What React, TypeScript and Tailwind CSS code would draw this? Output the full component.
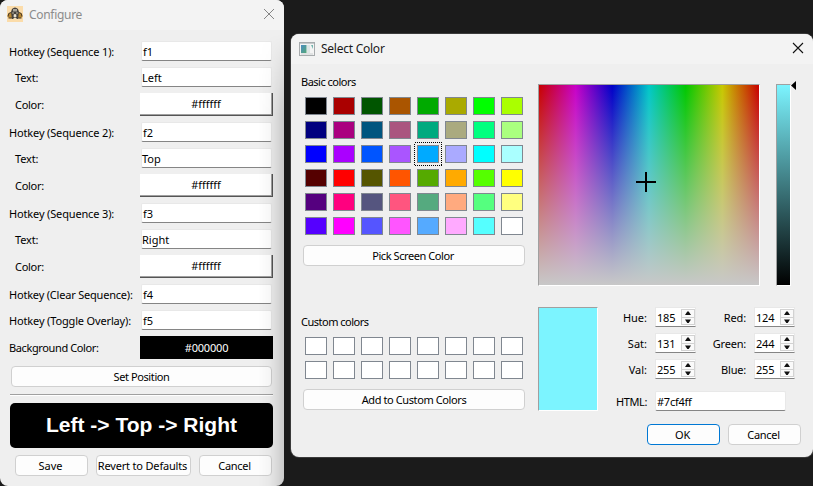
import React from "react";

const BASIC: string[][] = [
  ["#000000", "#aa0000", "#005500", "#aa5500", "#00aa00", "#aaaa00", "#00ff00", "#aaff00"],
  ["#00007f", "#aa007f", "#00557f", "#aa557f", "#00aa7f", "#aaaa7f", "#00ff7f", "#aaff7f"],
  ["#0000ff", "#aa00ff", "#0055ff", "#aa55ff", "#00aaff", "#aaaaff", "#00ffff", "#aaffff"],
  ["#550000", "#ff0000", "#555500", "#ff5500", "#55aa00", "#ffaa00", "#55ff00", "#ffff00"],
  ["#55007f", "#ff007f", "#55557f", "#ff557f", "#55aa7f", "#ffaa7f", "#55ff7f", "#ffff7f"],
  ["#5500ff", "#ff00ff", "#5555ff", "#ff55ff", "#55aaff", "#ffaaff", "#55ffff", "#ffffff"],
];

function Field({ value, className = "" }: { value: string; className?: string }) {
  return (
    <div className={`flex h-5 items-center rounded-[2px] border border-[#e8e8e8] border-b-[#858585] bg-white pt-0.5 ${className}`}>
      {value}
    </div>
  );
}

function Button({ label, className = "" }: { label: string; className?: string }) {
  return (
    <div className={`flex h-[21px] shrink-0 items-center justify-center whitespace-nowrap rounded-[4px] border bg-[#fdfdfd] ${className}`}>
      {label}
    </div>
  );
}

function FormRow({
  label,
  indent = false,
  tracking = "tracking-[-0.15px]",
  drop = true,
  children,
}: {
  label: string;
  indent?: boolean;
  tracking?: string;
  drop?: boolean;
  children: React.ReactNode;
}) {
  return (
    <div className="flex items-center">
      <div className={`w-[140px] shrink-0 whitespace-nowrap ${drop ? "pt-0.5" : ""} ${tracking} ${indent ? "pl-[15px]" : "pl-[9px]"}`}>
        {label}
      </div>
      {children}
    </div>
  );
}

function ColorButton({ value }: { value: string }) {
  return (
    <div className="flex h-[23px] w-[133px] items-center justify-center border-b border-r border-[#555] bg-white tracking-[-0.05px] shadow-[inset_-1px_-1px_0_#a0a0a0]">
      {value}
    </div>
  );
}

function Sequence({ n, text }: { n: number; text: string }) {
  return (
    <div className="flex flex-col gap-1.5">
      <FormRow label={`Hotkey (Sequence ${n}):`}>
        <Field value={`f${n}`} className="ml-px w-[131px] pl-px" />
      </FormRow>
      <FormRow label="Text:" indent>
        <Field value={text} className="ml-px w-[131px]" />
      </FormRow>
      <FormRow label="Color:" indent tracking="tracking-[-0.3px]" drop={false}>
        <ColorButton value="#ffffff" />
      </FormRow>
    </div>
  );
}

function Swatch({ color, selected = false }: { color: string; selected?: boolean }) {
  return (
    <div className="relative h-[18px] w-[22px] border border-[#808790]" style={{ backgroundColor: color }}>
      {selected && (
        <svg className="absolute -left-[4px] -top-[4px] h-6 w-7" viewBox="0 0 28 24" shapeRendering="crispEdges">
          <rect x=".5" y=".5" width="27" height="23" fill="none" stroke="#000" strokeDasharray="1 1" />
        </svg>
      )}
    </div>
  );
}

function Spin({ label, value, labelWidth }: { label: string; value: number; labelWidth: string }) {
  return (
    <div className="flex h-5 items-center">
      <div className={`${labelWidth} pt-0.5 text-right`}>{label}</div>
      <div className="ml-[7px] flex h-5 w-[41px] items-center border border-[#e8e8e8] border-b-[#858585] bg-white pl-px">
        <span className="w-6 pt-0.5 tracking-[-0.2px]">{value}</span>
        <svg className="h-4 w-[14px] shrink-0" viewBox="0 0 14 16">
          <rect x=".5" y=".5" width="13" height="15" fill="#fafafa" stroke="#d2d2d2" />
          <path d="M1 8.500H13" stroke="#d2d2d2" />
          <path d="M4 6L6.300 2.500H7.700L10 6Z M4 10.500H10L7.700 14H6.300Z" fill="#111" />
        </svg>
      </div>
    </div>
  );
}

function AppIcon() {
  return (
    <svg className="h-4 w-4" viewBox="0 0 16 16">
      <rect width="16" height="16" fill="#fbdcaa" />
      <circle cx="3.5" cy="9.5" r="2.8" fill="#b8862f" />
      <circle cx="12.5" cy="9.5" r="2.8" fill="#b8862f" />
      <path d="M1 10.500Q1 6.500 4 6.500M15 10.500Q15 6.500 12 6.500M1.500 12H5M11 12H14.500" stroke="#4a3a28" fill="none" />
      <path d="M5 3Q8 0 11 3L12 6L11 13H5L4 6Z" fill="#45413d" />
      <path d="M6 3H10V5.500H6Z" fill="#a9a59c" />
      <path d="M5 7H7M9 7H11M7 8.500H9V11H7Z" stroke="#ddd2bd" fill="#eee" strokeWidth=".8" />
      <path d="M6.500 12.500H9.500" stroke="#f7e3bd" />
    </svg>
  );
}

function DialogIcon() {
  return (
    <svg className="h-[14px] w-4" viewBox="0 0 16 14">
      <defs>
        <linearGradient id="pane" x2="1" y2="1">
          <stop stopColor="#4b8cc0" />
          <stop offset="1" stopColor="#55a878" />
        </linearGradient>
      </defs>
      <rect x=".5" y=".5" width="15" height="13" fill="#f4f4f4" stroke="#a7abad" />
      <path d="M1 1.500H15" stroke="#c5c9cb" />
      <rect x="2" y="3" width="5.5" height="8" fill="url(#pane)" />
      <rect x="8" y="3" width="3" height="8" fill="#dce5e5" />
      <path d="M12 3H14V7Z" fill="#72b4ad" />
      <path d="M2 12H14" stroke="#ccd0d1" />
    </svg>
  );
}

function ConfigureWindow() {
  return (
    <div className="absolute left-0 top-0 h-[486px] w-[284px] overflow-hidden rounded-[8px] bg-[#efefef]">
      <div className="flex h-[30px] items-center bg-[#f3f3f3] pl-[7px] pr-[9px]">
        <div className="-mt-0.5"><AppIcon /></div>
        <span className="ml-1.5 text-[12px] tracking-[-0.3px] text-[#8c8c8c]">Configure</span>
        <svg className="-mt-0.5 ml-auto h-3 w-3" viewBox="0 0 12 12">
          <path d="M1 1L11 11M11 1L1 11" stroke="#858585" />
        </svg>
      </div>
      <div className="mt-[11px] flex flex-col gap-1.5">
        <Sequence n={1} text="Left" />
        <Sequence n={2} text="Top" />
        <Sequence n={3} text="Right" />
        <FormRow label="Hotkey (Clear Sequence):" tracking="tracking-[-0.2px]">
          <Field value="f4" className="ml-px w-[131px] pl-px" />
        </FormRow>
        <FormRow label="Hotkey (Toggle Overlay):" tracking="tracking-[-0.15px]">
          <Field value="f5" className="ml-px w-[131px] pl-px" />
        </FormRow>
        <FormRow label="Background Color:" tracking="tracking-[-0.38px]" drop={false}>
          <div className="flex h-[23px] w-[133px] items-center justify-center bg-black tracking-[-0.2px] text-white">#000000</div>
        </FormRow>
      </div>
      <Button label="Set Position" className="ml-[11px] mt-[7px] w-[261px] border-[#d0d0d0] tracking-[-0.4px]" />
      <div className="ml-[10px] mt-[7px] h-0.5 w-[263px] border-b border-t border-b-white border-t-[#a0a0a0]" />
      <div className="ml-[10px] mt-[7px] flex h-[45px] w-[263px] items-center justify-center rounded-[5px] bg-black pb-0.5 font-['Liberation_Sans',Arial,sans-serif] text-[21px] font-bold text-white">
        Left -&gt; Top -&gt; Right
      </div>
      <div className="ml-[15px] mt-[7px] flex gap-2">
        <Button label="Save" className="w-[73px] border-[#d0d0d0] pr-0.5" />
        <Button label="Revert to Defaults" className="w-[95px] border-[#d0d0d0] pr-0.5 tracking-[-0.18px]" />
        <Button label="Cancel" className="w-[73px] border-[#d0d0d0] pr-0.5 tracking-[-0.3px]" />
      </div>
      <div className="absolute bottom-0 right-0 top-[34px] w-[26px] bg-[linear-gradient(to_right,transparent,rgba(0,0,0,0.03)_45%,rgba(0,0,0,0.15))] [mask-image:linear-gradient(to_bottom,transparent,black_80px)]" />
    </div>
  );
}

function ColorDialog() {
  return (
    <div className="absolute left-[291px] top-[34px] h-[423px] w-[522px] rounded-[8px] bg-[#efefef] shadow-[0_0_0_1px_#3b3b3b]">
      <div className="flex h-[30px] items-center rounded-t-[8px] bg-[#f3f3f3] pl-2 pr-[9px]">
        <DialogIcon />
        <span className="ml-1.5 text-[12px] tracking-[-0.25px] text-[#191919]">Select Color</span>
        <svg className="-mt-0.5 ml-auto h-3 w-3" viewBox="0 0 12 12">
          <path d="M1 1L11 11M11 1L1 11" stroke="#111" strokeWidth="1.1" />
        </svg>
      </div>
      <div className="flex">
        <div className="w-[247px] pl-3">
          <div className="-ml-[2px] mt-[10px] h-4 leading-4 tracking-[-0.5px]">Basic colors</div>
          <div className="ml-0.5 mt-[7px] grid w-[218px] grid-cols-8 gap-1.5">
            {BASIC.map((row, r) => row.map((c, i) => <Swatch key={`${r}-${i}`} color={c} selected={r === 2 && i === 4} />))}
          </div>
          <Button label="Pick Screen Color" className="mt-[10px] w-[222px] border-[#d0d0d0] pr-0.5 tracking-[-0.42px]" />
          <div className="-ml-[2px] mt-[48px] h-4 leading-4 tracking-[-0.5px]">Custom colors</div>
          <div className="ml-0.5 mt-[7px] grid w-[218px] grid-cols-8 gap-1.5">
            {Array.from({ length: 16 }, (_, i) => <Swatch key={i} color="#ffffff" />)}
          </div>
          <Button label="Add to Custom Colors" className="mt-[10px] w-[222px] border-[#d0d0d0] tracking-[-0.4px]" />
        </div>
        <div className="pt-5">
          <div className="flex">
            <div className="relative h-[202px] w-[222px] border border-b-white border-l-[#a0a0a0] border-r-white border-t-[#a0a0a0]">
              <div className="h-full w-full bg-[linear-gradient(to_bottom,rgba(200,200,200,0),#c8c8c8),linear-gradient(to_right,#c80000,#c800c8,#0000c8,#00c8c8,#00c800,#c8c800,#c80000)]" />
              <div className="absolute left-[97px] top-[96px] h-0.5 w-5 bg-black" />
              <div className="absolute left-[106px] top-[87px] h-5 w-0.5 bg-black" />
            </div>
            <div className="relative ml-4 h-[202px] w-[15px] border border-b-white border-l-[#a0a0a0] border-r-white border-t-[#a0a0a0] bg-[linear-gradient(to_bottom,#7cf4ff,#000)]">
              <svg className="absolute -top-1 left-[14px] h-[9px] w-[5px]" viewBox="0 0 5 9">
                <path d="M5 0V9L0 4.500Z" fill="#000" />
              </svg>
            </div>
          </div>
          <div className="mt-[21px] flex">
            <div className="h-[104px] w-[60px] border border-b-white border-l-[#a0a0a0] border-r-white border-t-[#a0a0a0] bg-[#7cf4ff]" />
            <div className="ml-[14px] flex flex-col">
              <div className="flex">
                <div className="flex flex-col gap-1.5">
                  <Spin label="Hue:" value={185} labelWidth="w-[35px] mr-px" />
                  <Spin label="Sat:" value={131} labelWidth="w-[35px] mr-px" />
                  <Spin label="Val:" value={255} labelWidth="w-[35px] mr-px" />
                </div>
                <div className="ml-2.5 flex flex-col gap-1.5">
                  <Spin label="Red:" value={124} labelWidth="w-10 mr-px tracking-[-0.1px]" />
                  <Spin label="Green:" value={244} labelWidth="w-10 mr-px tracking-[-0.2px]" />
                  <Spin label="Blue:" value={255} labelWidth="w-10 mr-px tracking-[-0.2px]" />
                </div>
              </div>
              <div className="mt-3 flex items-center">
                <div className="w-[35px] pt-0.5 text-right tracking-[-0.4px]">HTML:</div>
                <Field value="#7cf4ff" className="ml-2 w-[131px] pl-px tracking-[-0.25px]" />
              </div>
            </div>
          </div>
          <div className="ml-[109px] mt-[13px] flex gap-2">
            <Button label="OK" className="w-[73px] border-[#0078d4] pr-0.5 tracking-[-0.3px]" />
            <Button label="Cancel" className="w-[73px] border-[#d0d0d0] pr-0.5 tracking-[-0.3px]" />
          </div>
        </div>
      </div>
    </div>
  );
}

export default function App() {
  return (
    <div className="relative h-[486px] w-[813px] overflow-hidden bg-[#1b1b1b] font-['Noto_Sans',Tahoma,sans-serif] text-[11px] leading-4 text-black">
      <ConfigureWindow />
      <ColorDialog />
    </div>
  );
}
